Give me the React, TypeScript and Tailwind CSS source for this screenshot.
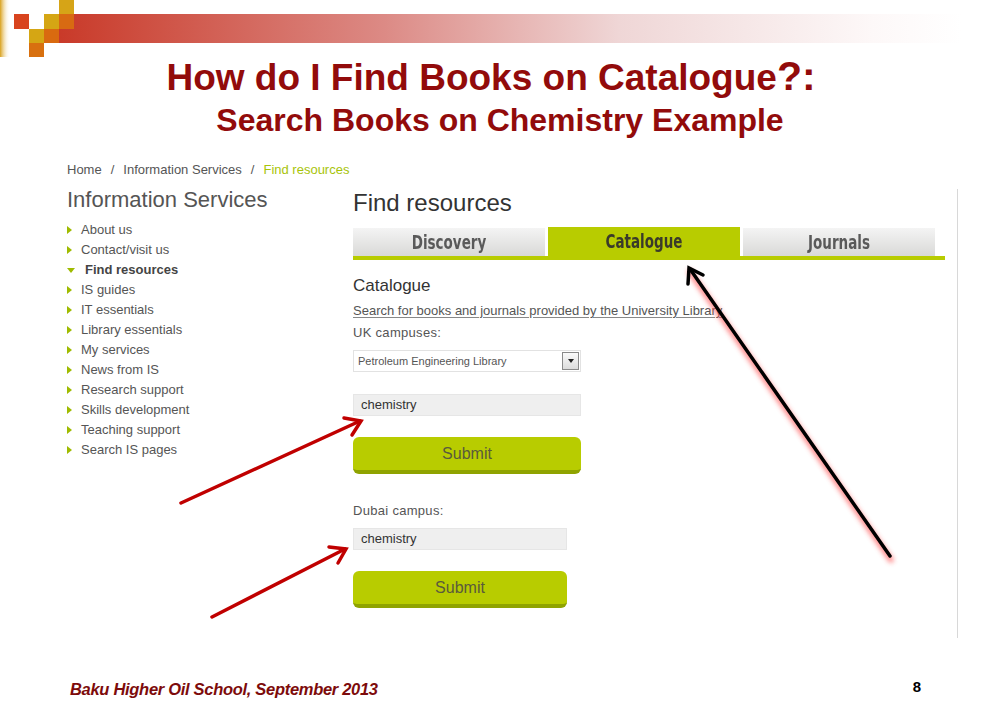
import React from 'react'

const sideItems = [
  { label: 'About us' },
  { label: 'Contact/visit us' },
  { label: 'Find resources', open: true },
  { label: 'IS guides' },
  { label: 'IT essentials' },
  { label: 'Library essentials' },
  { label: 'My services' },
  { label: 'News from IS' },
  { label: 'Research support' },
  { label: 'Skills development' },
  { label: 'Teaching support' },
  { label: 'Search IS pages' },
]

const tabs = [
  { label: 'Discovery', active: false },
  { label: 'Catalogue', active: true },
  { label: 'Journals', active: false },
]

function HeaderBand() {
  return (
    <svg width="982" height="57" viewBox="0 0 982 57" className="block">
      <defs>
        <linearGradient id="band" x1="0" x2="1" y1="0" y2="0">
          <stop offset="0" stopColor="#c93a29" />
          <stop offset="0.36" stopColor="#dc8a85" />
          <stop offset="0.62" stopColor="#efd6d6" />
          <stop offset="0.9" stopColor="#fdf8f8" />
          <stop offset="1" stopColor="#ffffff" />
        </linearGradient>
        <linearGradient id="edge" x1="0" x2="1" y1="0" y2="0">
          <stop offset="0" stopColor="#d9a11c" />
          <stop offset="1" stopColor="#ffffff" stopOpacity="0" />
        </linearGradient>
      </defs>
      <rect x="59" y="14" width="903" height="29" fill="url(#band)" />
      <rect x="0" y="0" width="10" height="57" fill="url(#edge)" />
      <rect x="14" y="14" width="15" height="15" fill="#d8441e" />
      <rect x="59" y="0" width="15" height="14" fill="#d6a417" />
      <rect x="44" y="14" width="15" height="15" fill="#d5a614" />
      <rect x="59" y="14" width="15" height="15" fill="#d86a12" />
      <rect x="29" y="29" width="15" height="14" fill="#d5a614" />
      <rect x="44" y="29" width="15" height="14" fill="#d96a10" />
      <rect x="29" y="43" width="15" height="14" fill="#d8700f" />
    </svg>
  )
}

function Arrows() {
  return (
    <svg
      width="982"
      height="720"
      viewBox="0 0 982 720"
      className="absolute left-0 top-0 pointer-events-none"
    >
      <defs>
        <filter id="glow" x="-20%" y="-20%" width="140%" height="140%">
          <feGaussianBlur stdDeviation="2.5" />
        </filter>
      </defs>
      {/* red arrows */}
      <g stroke="#c00000" strokeWidth="3.5" strokeLinecap="round" fill="none">
        <line x1="181" y1="503" x2="360" y2="421" />
        <polyline points="344,418 361,421 352,435" strokeLinejoin="miter" />
        <line x1="212" y1="617" x2="345" y2="549" />
        <polyline points="329,547 346,549 338,563" strokeLinejoin="miter" />
      </g>
      {/* black arrow with red glow */}
      <g fill="none" strokeLinecap="round">
        <g stroke="#ff4a4a" strokeWidth="5" opacity="0.7" filter="url(#glow)">
          <line x1="891" y1="560" x2="690" y2="272" />
        </g>
        <g stroke="#000" strokeWidth="3.5">
          <line x1="890" y1="556" x2="690" y2="269" />
          <polyline points="688,284 689,268 703,275" strokeLinejoin="miter" />
        </g>
      </g>
    </svg>
  )
}

export default function App() {
  return (
    <div
      className="relative w-[982px] h-[720px] bg-white overflow-hidden"
      style={{ fontFamily: '"Liberation Sans", Arial, sans-serif' }}
    >
      <HeaderBand />

      {/* Slide title */}
      <div className="text-center font-bold text-[#920b0b]">
        <div className="text-[37px] leading-[38px]">
          How do I Find Books on Catalogue<span className="text-[41px]">?:</span>
        </div>
        <div className="mt-[5px] pl-[18px] text-[32px] leading-[36px]">
          Search Books on Chemistry Example
        </div>
      </div>

      {/* Web page screenshot */}
      <div className="pl-[67px]">
        <div className="mt-[23px] text-[13px] leading-[18px] text-[#555]">
          Home<span className="mx-[9px]">/</span>Information Services
          <span className="mx-[9px]">/</span>
          <span className="text-[#a8c40a]">Find resources</span>
        </div>

        <div className="flex">
          {/* Sidebar */}
          <div className="w-[286px] shrink-0">
            <div className="mt-[8px] text-[22px] leading-[26px] text-[#555]">
              Information Services
            </div>
            <ul className="mt-[7px]">
              {sideItems.map((item) => (
                <li
                  key={item.label}
                  className="flex items-center h-[20px] text-[13px] text-[#555]"
                >
                  {item.open ? (
                    <span className="w-[18px] flex">
                      <span className="border-l-[4px] border-r-[4px] border-t-[5px] border-l-transparent border-r-transparent border-t-[#9fbb00]" />
                    </span>
                  ) : (
                    <span className="w-[14px] flex">
                      <span className="border-t-[4px] border-b-[4px] border-l-[5px] border-t-transparent border-b-transparent border-l-[#9fbb00]" />
                    </span>
                  )}
                  <span className={item.open ? 'font-bold text-[#444]' : ''}>
                    {item.label}
                  </span>
                </li>
              ))}
            </ul>
          </div>

          {/* Main panel */}
          <div className="mt-[10px] w-[605px] border-r border-[#d8d8d8] pb-[30px]">
            <div className="text-[24px] leading-[28px] text-[#333]">Find resources</div>

            <div className="mt-[10px] w-[592px]">
              <div className="flex gap-[3px]">
                {tabs.map((t) => (
                  <div
                    key={t.label}
                    className={
                      t.active
                        ? 'w-[192px] h-[29px] flex items-center justify-center bg-[#b8cc00] text-[#3a3a2a]'
                        : 'w-[192px] h-[29px] flex items-center justify-center bg-gradient-to-b from-[#f4f4f4] to-[#d9d9d7] border-t border-white text-[#5a5a5a]'
                    }
                    style={{ fontFamily: '"Liberation Sans Narrow", "DejaVu Sans Condensed", sans-serif' }}
                  >
                    <span className="text-[15px] font-bold scale-y-[1.35]">{t.label}</span>
                  </div>
                ))}
              </div>
              <div className="h-[4px] bg-[#b8cc00]" />
            </div>

            <div className="mt-[15px] text-[17px] leading-[22px] text-[#333]">Catalogue</div>
            <div className="mt-[6px] text-[13px] leading-[16px] text-[#555] underline underline-offset-2 decoration-[#888]">
              Search for books and journals provided by the University Library
            </div>

            <div className="mt-[5px] text-[13px] leading-[18px] text-[#555] tracking-[0.3px]">
              UK campuses:
            </div>
            <div className="mt-[8px] w-[228px] h-[22px] flex items-center justify-between border border-[#e2e2e2] bg-white pl-[4px] pr-[1px]">
              <span className="text-[11px] text-[#555]">Petroleum Engineering Library</span>
              <span className="w-[17px] h-[18px] flex items-center justify-center border border-[#8a8a8a] bg-gradient-to-b from-[#fafafa] to-[#dcdcdc]">
                <span className="border-l-[3px] border-r-[3px] border-t-[4px] border-l-transparent border-r-transparent border-t-[#222]" />
              </span>
            </div>

            <div className="mt-[22px] w-[228px] h-[22px] flex items-center bg-[#efefef] border border-[#e6e6e6] pl-[7px] text-[13px] text-[#333]">
              chemistry
            </div>
            <div className="mt-[21px] w-[228px] h-[37px] flex items-center justify-center rounded-[6px] bg-[#b8cc00] border-b-[4px] border-[#8fa300] text-[16px] text-[#5a5a3c]">
              Submit
            </div>

            <div className="mt-[28px] text-[13px] leading-[18px] text-[#555] tracking-[0.3px]">
              Dubai campus:
            </div>
            <div className="mt-[8px] w-[214px] h-[22px] flex items-center bg-[#efefef] border border-[#e6e6e6] pl-[7px] text-[13px] text-[#333]">
              chemistry
            </div>
            <div className="mt-[21px] w-[214px] h-[37px] flex items-center justify-center rounded-[6px] bg-[#b8cc00] border-b-[4px] border-[#8fa300] text-[16px] text-[#5a5a3c]">
              Submit
            </div>
          </div>
        </div>
      </div>

      {/* Footer */}
      <div className="mt-[39px] flex items-center justify-between pl-[70px] pr-[61px]">
        <span className="text-[16.5px] italic font-bold text-[#7d0b0b] tracking-[-0.3px]">
          Baku Higher Oil School, September 2013
        </span>
        <span className="text-[15px] font-bold text-black -mt-[4px]">8</span>
      </div>

      <Arrows />
    </div>
  )
}
